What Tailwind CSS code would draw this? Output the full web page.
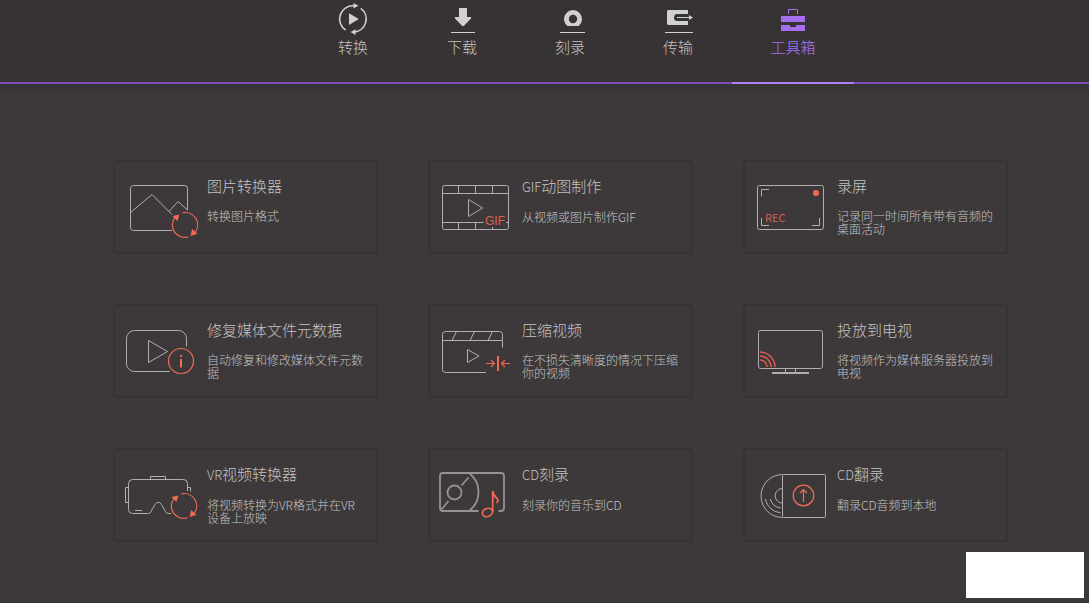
<!DOCTYPE html>
<html lang="zh-CN">
<head>
  <meta charset="UTF-8">
  <meta name="viewport" content="width=device-width, initial-scale=1.0">
  <title>工具箱</title>
  <script src="https://cdn.jsdelivr.net/npm/@tailwindcss/browser@4"></script>
</head>
<body class="min-h-screen flex flex-col bg-[#3d393a] text-[#c4c2c2] border-b border-[#343031] font-['Noto_Sans_CJK_SC',sans-serif] font-light">

<header class="bg-[#373334] border-b-2 border-[#7a4bb5]">
  <nav class="flex justify-center pl-[63px] text-[15px] leading-[22px]">
    <a href="#convert" class="flex flex-col items-center w-[110px] h-[84px] -mb-0.5">
      <svg class="w-11 h-9" viewBox="0 0 44 36" fill="none" stroke="#d0d0d0" stroke-width="1.6">
        <path d="M14.6 30A13.2 13.2 0 0 1 23 5.8M29.8 8.3A13.2 13.2 0 0 1 23 32.1"/>
        <path d="M22.5 3l5 2.8-5 2.8zM24.5 29.2l-5 2.9 5 2.8zM18 13.2l9.8 5.8-9.8 5.9z" fill="#d0d0d0" stroke="none"/>
      </svg>
      <span>转换</span>
    </a>
    <a href="#download" class="flex flex-col items-center w-[108px] h-[84px] -mb-0.5">
      <svg class="w-11 h-9" viewBox="0 0 44 36" fill="#d0d0d0">
        <path d="M19 8h8v9h4v1.5L23.8 26h-1.6L15 18.500V17h4zM11 32h24v1H11z"/>
      </svg>
      <span>下载</span>
    </a>
    <a href="#burn" class="flex flex-col items-center w-[108px] h-[84px] -mb-0.5">
      <svg class="w-11 h-9" viewBox="0 0 44 36" fill="#d0d0d0">
        <path fill-rule="evenodd" d="M19.300 26A9 9 0 1 1 30.700 26zM25 14.800a4.200 4.200 0 1 0 0 8.400a4.200 4.200 0 1 0 0-8.400zM12 32h25v1H12z"/>
      </svg>
      <span>刻录</span>
    </a>
    <a href="#transfer" class="flex flex-col items-center w-[108px] h-[84px] -mb-0.5">
      <svg class="w-11 h-9" viewBox="0 0 44 36" fill="#d0d0d0">
        <path d="M12 10h20v4H20.500Q18 14.500 18 17.500T20.500 21H32v4H12l-1-1V11zM21 17h12v-2l4 2.500-4 2.500v-2H21zM9 32h28v1H9z"/>
      </svg>
      <span>传输</span>
    </a>
    <a href="#toolbox" aria-current="page" class="flex flex-col items-center w-[122px] h-[84px] -mb-0.5 border-b-2 border-[#ad82f8] text-[#a973f8]">
      <svg class="w-11 h-9" viewBox="0 0 44 36" fill="#a36fee">
        <path d="M10 16h24v6H10zM10 25h9v2h6v-2h9v6H10z"/>
        <path d="M17.500 14V9.500h9V14" fill="none" stroke="#a36fee"/>
      </svg>
      <span>工具箱</span>
    </a>
  </nav>
</header>

<div class="h-3 bg-linear-to-b from-[#373334] to-[#3d393a]"></div>

<main class="pt-16 pb-15 pl-[113px] pr-[81px]">
  <ul class="grid grid-cols-3 gap-[50px]">
    <li>
      <a href="#image-converter" class="flex min-h-[94px] rounded-sm border-2 border-[#373334] pr-3">
        <svg class="w-[92px] h-[90px] shrink-0" viewBox="0 0 92 90" fill="none" stroke="#b0aeae">
          <path d="M57 68.500H18.500a3 3 0 0 1-3-3V26.500a3 3 0 0 1 3-3H69.500a3 3 0 0 1 3 3V48M15.500 50.500L37 32.500 57 52.500M54 49.500L63 39.500 72.500 48"/>
          <g id="cycle" stroke="#f26a55" stroke-width="1.200">
            <path d="M60 55.500A12.300 12.300 0 0 0 73.500 74.800M67.500 50.900A12.300 12.300 0 0 1 80 70.500"/>
            <path d="M64.300 52.500l-6.800 1.500 5 5zM75.700 74l1.300-7 5.500 4.700z" fill="#f26a55" stroke="none"/>
          </g>
        </svg>
        <div class="min-w-0 pt-3.5">
          <h2 class="text-[15px] leading-5">图片转换器</h2>
          <p class="mt-[13px] text-xs leading-[13px]">转换图片格式</p>
        </div>
      </a>
    </li>
    <li>
      <a href="#gif-maker" class="flex min-h-[94px] rounded-sm border-2 border-[#373334] pr-3">
        <svg class="w-[92px] h-[90px] shrink-0" viewBox="0 0 92 90" fill="none" stroke="#b0aeae">
          <path d="M54 67.500H14.500a2 2 0 0 1-2-2V25.500a2 2 0 0 1 2-2H76.500a2 2 0 0 1 2 2V65.500a2 2 0 0 1-2 2H54M12.500 31.500H78.500M12.500 60.500H53.500M76 60.500h2.500M28.500 23.500v8M45.500 23.500v8M62.500 23.500v8M28.500 60.500v7M45.500 60.500v7M62.500 65v2.500"/>
          <path d="M38.500 37.500L52.500 46 38.500 54.500z"/>
          <text x="55" y="63" class="font-['Liberation_Sans',sans-serif] text-[12px]" fill="#e0604e" stroke="none">GIF</text>
        </svg>
        <div class="min-w-0 pt-3.5">
          <h2 class="text-[15px] leading-5"><span class="text-[13px]">GIF</span>动图制作</h2>
          <p class="mt-[13px] text-xs leading-[13px]">从视频或图片制作GIF</p>
        </div>
      </a>
    </li>
    <li>
      <a href="#screen-recorder" class="flex min-h-[94px] rounded-sm border-2 border-[#373334] pr-3">
        <svg class="w-[92px] h-[90px] shrink-0" viewBox="0 0 92 90" fill="none" stroke="#b0aeae">
          <rect x="12.500" y="23.500" width="66" height="44" rx="2"/>
          <path d="M16.500 34.500v-7H24M16.500 56v7.500H24M67 63.500h7.500V56"/>
          <circle cx="71" cy="31" r="3" fill="#f26a55" stroke="none"/>
          <text x="20" y="60" class="font-normal text-[11px]" fill="#d95f4e" stroke="none">REC</text>
        </svg>
        <div class="min-w-0 pt-3.5">
          <h2 class="text-[15px] leading-5">录屏</h2>
          <p class="mt-[13px] text-xs leading-[13px]">记录同一时间所有带有音频的桌面活动</p>
        </div>
      </a>
    </li>
    <li>
      <a href="#fix-metadata" class="flex min-h-[94px] rounded-sm border-2 border-[#373334] pr-3">
        <svg class="w-[92px] h-[90px] shrink-0" viewBox="0 0 92 90" fill="none" stroke="#b0aeae">
          <path d="M55 65.500H19.500a8 8 0 0 1-8-8V32.500a8 8 0 0 1 8-8H63.500a8 8 0 0 1 8 8V40.500M33.500 34.500L52.500 45.500 33.500 56.500z"/>
          <g stroke="#f26a55" stroke-width="1.200">
            <circle cx="66" cy="55" r="12.500"/>
            <path d="M66 49v2M66 53v8.500" stroke-width="2"/>
          </g>
        </svg>
        <div class="min-w-0 pt-3.5">
          <h2 class="text-[15px] leading-5">修复媒体文件元数据</h2>
          <p class="mt-[13px] text-xs leading-[13px]">自动修复和修改媒体文件元数据</p>
        </div>
      </a>
    </li>
    <li>
      <a href="#video-compressor" class="flex min-h-[94px] rounded-sm border-2 border-[#373334] pr-3">
        <svg class="w-[92px] h-[90px] shrink-0" viewBox="0 0 92 90" fill="none" stroke="#b0aeae">
          <path d="M56 66.500H15.500a3 3 0 0 1-3-3V28.500a3 3 0 0 1 3-3H69.500a3 3 0 0 1 3 3V41.500M12.500 34.500h60M22 34.500l4.500-9M40 34.500l4.500-9M58 34.500l4.500-9"/>
          <path d="M37.500 43.500L49 50 37.500 56.500z" stroke-linejoin="round"/>
          <g stroke="#f26a55" stroke-width="1.200">
            <path d="M56 57.500h8.500M61 54l3.500 3.500L61 61M80 57.500h-8.500M75 54l-3.500 3.500L75 61"/>
            <path d="M68 50v15" stroke-width="2"/>
          </g>
        </svg>
        <div class="min-w-0 pt-3.5">
          <h2 class="text-[15px] leading-5">压缩视频</h2>
          <p class="mt-[13px] text-xs leading-[13px]">在不损失清晰度的情况下压缩你的视频</p>
        </div>
      </a>
    </li>
    <li>
      <a href="#cast-to-tv" class="flex min-h-[94px] rounded-sm border-2 border-[#373334] pr-3">
        <svg class="w-[92px] h-[90px] shrink-0" viewBox="0 0 92 90" fill="none" stroke="#b0aeae">
          <rect x="13.500" y="24.500" width="64" height="38" rx="2"/>
          <path d="M40.500 62.500V66M50.500 62.500V66"/>
          <path d="M27 67h37" stroke-width="2"/>
          <path d="M15 54a7 7 0 0 1 7 7M15 50a11 11 0 0 1 11 11M15 46a15 15 0 0 1 15 15" stroke="#d9604e" stroke-width="1.400"/>
        </svg>
        <div class="min-w-0 pt-3.5">
          <h2 class="text-[15px] leading-5">投放到电视</h2>
          <p class="mt-[13px] text-xs leading-[13px]">将视频作为媒体服务器投放到电视</p>
        </div>
      </a>
    </li>
    <li>
      <a href="#vr-converter" class="flex min-h-[94px] rounded-sm border-2 border-[#373334] pr-3">
        <svg class="w-[92px] h-[90px] shrink-0" viewBox="0 0 92 90" fill="none" stroke="#b0aeae">
          <path d="M56 63.500H53Q51.500 63.500 50.500 61.500L46.500 54.500Q43.300 50 40 54.500L36 61.500Q35 63.500 33.500 63.500H17.500a4 4 0 0 1-4-4V33.500a4 4 0 0 1 4-4H68.500a4 4 0 0 1 4 4V41M35.500 29.500v-3h15v3M13.500 37.500h-3v15h3M72.500 37.500h3v4M20 60.500h7"/>
          <use href="#cycle" x="-1" y="-7"/>
        </svg>
        <div class="min-w-0 pt-3.5">
          <h2 class="text-[15px] leading-5"><span class="text-[13px]">VR</span>视频转换器</h2>
          <p class="mt-[13px] text-xs leading-[13px]">将视频转换为VR格式并在VR设备上放映</p>
        </div>
      </a>
    </li>
    <li>
      <a href="#cd-burner" class="flex min-h-[94px] rounded-sm border-2 border-[#373334] pr-3">
        <svg class="w-[92px] h-[90px] shrink-0" viewBox="0 0 92 90" fill="none" stroke="#949292" stroke-width="1.800">
          <path d="M48.500 61H13a3 3 0 0 1-3-3V26a3 3 0 0 1 3-3H71a3 3 0 0 1 3 3V58a3 3 0 0 1-3 3H68.500M39 23Q48.500 30 48.500 42T39 61M31.500 35.500L38.500 27.500M11 60L18.500 51"/>
          <circle cx="24.500" cy="42.500" r="7"/>
          <g stroke="#f26a55" stroke-width="1.700">
            <ellipse cx="57.500" cy="62.500" rx="5.200" ry="4" transform="rotate(-20 57.500 62.500)"/>
            <path d="M62.700 62V41Q63.500 45.500 66.500 48T66.500 53"/>
          </g>
        </svg>
        <div class="min-w-0 pt-3.5">
          <h2 class="text-[15px] leading-5"><span class="text-[13px]">CD</span>刻录</h2>
          <p class="mt-[13px] text-xs leading-[13px]">刻录你的音乐到CD</p>
        </div>
      </a>
    </li>
    <li>
      <a href="#cd-ripper" class="flex min-h-[94px] rounded-sm border-2 border-[#373334] pr-3">
        <svg class="w-[92px] h-[90px] shrink-0" viewBox="0 0 92 90" fill="none" stroke="#b0aeae">
          <rect x="37.500" y="24.500" width="43" height="43" rx="1"/>
          <path d="M37.500 24.500a21.500 21.500 0 0 0 0 43M37.500 38.500a7.300 7.300 0 0 0 0 14.600M20.300 49A17 17 0 0 0 35.500 62.800M25.300 49A12.500 12.500 0 0 0 35.500 58"/>
          <g stroke="#f26a55" stroke-width="1.200">
            <circle cx="58.500" cy="45.500" r="10.300"/>
            <path d="M58.500 52V39.500M55 43l3.500-3.500L62 43"/>
          </g>
        </svg>
        <div class="min-w-0 pt-3.5">
          <h2 class="text-[15px] leading-5"><span class="text-[13px]">CD</span>翻录</h2>
          <p class="mt-[13px] text-xs leading-[13px]">翻录CD音频到本地</p>
        </div>
      </a>
    </li>
  </ul>
</main>

<div class="fixed right-[5px] bottom-[5px] w-[118px] h-[46px] bg-white"></div>

</body>
</html>
